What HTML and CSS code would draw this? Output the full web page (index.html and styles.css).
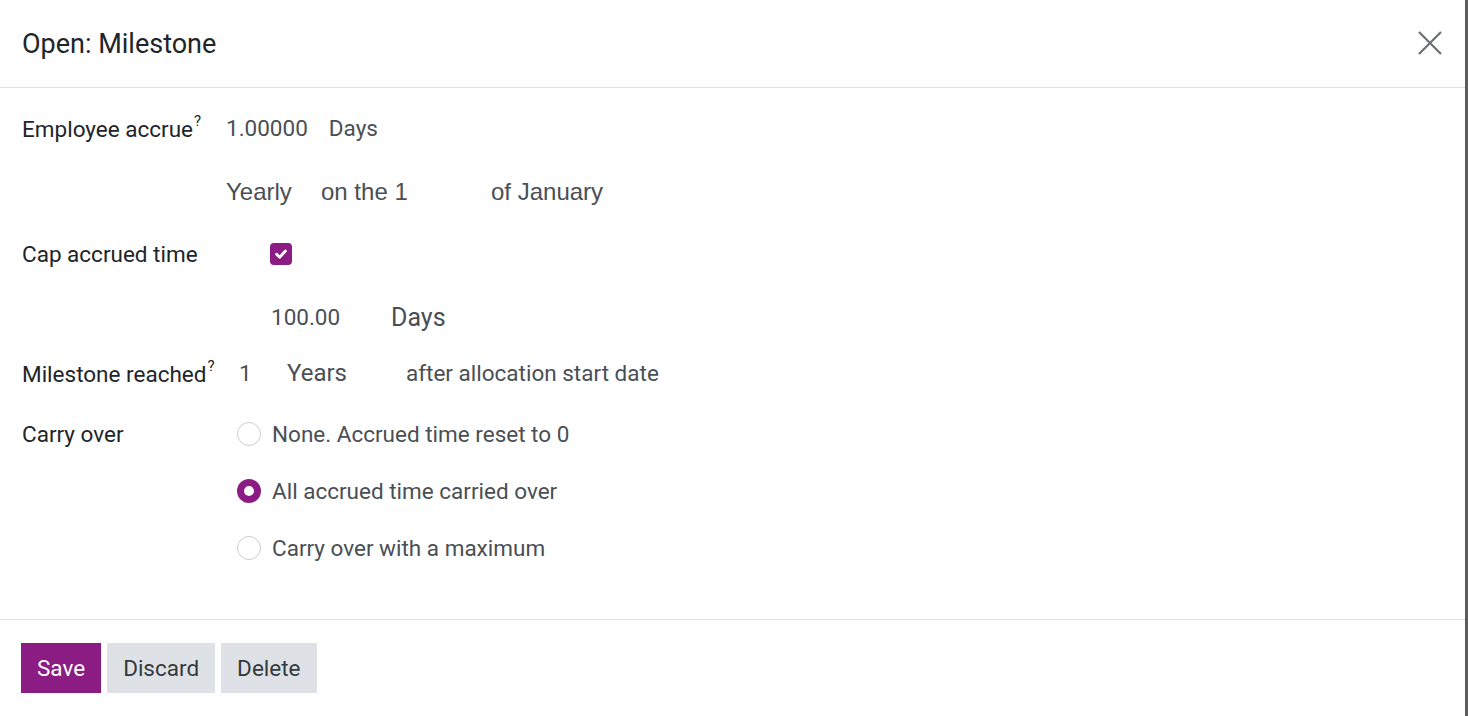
FILE: index.html
```html
<!DOCTYPE html>
<html lang="en">
<head>
  <meta charset="UTF-8" />
  <title>Open: Milestone</title>
  <link rel="stylesheet" href="styles.css">
</head>
<body>

<div class="modal">
  <div class="modal-header">
    <h4>Open: Milestone</h4>
    <button class="close" aria-label="Close">
      <svg width="24" height="24" viewBox="0 0 24 24"><path d="M1 1 L23 23 M23 1 L1 23" stroke="#6b6f73" stroke-width="2.2" fill="none"/></svg>
    </button>
  </div>

  <div class="modal-body">
    <div class="row r1">
      <span class="label w-accrue">Employee accrue<sup>?</sup></span>
      <span class="value">1.00000</span>
      <span class="value unit">Days</span>
    </div>

    <div class="row r2">
      <span class="sans yearly">Yearly</span>
      <span class="sans onthe">on the 1</span>
      <span class="sans">of January</span>
    </div>

    <div class="row r3">
      <span class="label w-cap">Cap accrued time</span>
      <span class="checkbox">
        <svg width="14" height="14" viewBox="0 0 14 14"><path d="M2.6 7.2 L5.7 10.2 L11.4 4" stroke="#fff" stroke-width="2.8" fill="none" stroke-linecap="round" stroke-linejoin="round"/></svg>
      </span>
    </div>

    <div class="row r4">
      <span class="value cap-num">100.00</span>
      <span class="value days-big">Days</span>
    </div>

    <div class="row r5">
      <span class="label w-mile">Milestone reached<sup>?</sup></span>
      <span class="value one">1</span>
      <span class="value years">Years</span>
      <span class="value">after allocation start date</span>
    </div>

    <div class="row r6">
      <span class="label w-carry">Carry over</span>
      <div class="radios">
        <label class="radio"><span class="dot"></span>None. Accrued time reset to 0</label>
        <label class="radio"><span class="dot on"></span>All accrued time carried over</label>
        <label class="radio"><span class="dot"></span>Carry over with a maximum</label>
      </div>
    </div>
  </div>

  <div class="modal-footer">
    <button class="btn primary">Save</button>
    <button class="btn">Discard</button>
    <button class="btn">Delete</button>
  </div>
</div>

</body>
</html>
```

FILE: styles.css
```css
html, body {
  margin: 0;
  height: 100%;
}
body {
  font-family: Roboto, "Noto Sans", sans-serif;
  background: #5c5c5c;
  color: #212529;
}
.modal {
  width: 1465px;
  height: 716px;
  background: #fff;
  display: flex;
  flex-direction: column;
}
.modal-header {
  height: 87px;
  border-bottom: 1px solid #dee2e6;
  display: flex;
  align-items: center;
  justify-content: space-between;
  padding: 0 23px 0 22px;
}
.modal-header h4 {
  margin: 0;
  font-size: 27px;
  font-weight: 400;
  color: #212529;
}
.close {
  border: none;
  background: none;
  padding: 0;
  width: 24px;
  height: 24px;
  margin-top: -1px;
  cursor: pointer;
}
.modal-body {
  flex: 1;
  padding: 20px 22px 0;
}
.row {
  display: flex;
  align-items: center;
  height: 40px;
  font-size: 22.5px;
}
.r2 { margin-top: 24px; padding-left: 204px; }
.r3 { margin-top: 22px; }
.r4 { margin-top: 23px; padding-left: 249px; }
.r5 { margin-top: 16px; }
.r6 { margin-top: 21px; align-items: flex-start; }

.label {
  color: #212529;
  flex: none;
}
.label sup {
  font-size: 15px;
  margin-left: 1px;
  position: relative;
  top: -2px;
}
.w-accrue { width: 204px; }
.w-cap { width: 248px; }
.w-mile { width: 217px; }
.w-carry { width: 215px; line-height: 40px; }

.value { color: #4a4f55; }
.unit { margin-left: 21px; }
.sans {
  font-family: "Liberation Sans", Arial, sans-serif;
  font-size: 24px;
  color: #4a4f55;
}
.yearly { width: 95px; }
.onthe { width: 170px; }

.checkbox {
  width: 22px;
  height: 22px;
  border-radius: 4px;
  background: #8a1c83;
  display: flex;
  align-items: center;
  justify-content: center;
}
.cap-num { width: 120px; }
.days-big { font-size: 25px; }
.one { width: 48px; }
.years { width: 119px; font-size: 24px; }

.radios {
  display: flex;
  flex-direction: column;
  gap: 17px;
}
.radio {
  display: flex;
  align-items: center;
  height: 40px;
  color: #4a4f55;
  font-size: 22.5px;
}
.dot {
  width: 24px;
  height: 24px;
  border: 1px solid #c9ccd0;
  border-radius: 50%;
  margin-right: 11px;
  box-sizing: border-box;
}
.dot.on {
  border: 7px solid #8a1c83;
}

.modal-footer {
  border-top: 1px solid #dee2e6;
  padding: 23px 21px;
  display: flex;
  gap: 6px;
}
.btn {
  height: 50px;
  border: none;
  border-radius: 0;
  padding: 0 16px;
  font-family: Roboto, sans-serif;
  font-size: 22.5px;
  background: #dee2e6;
  color: #343a40;
  cursor: pointer;
}
.btn.primary {
  background: #8a1c83;
  color: #fff;
}
```
